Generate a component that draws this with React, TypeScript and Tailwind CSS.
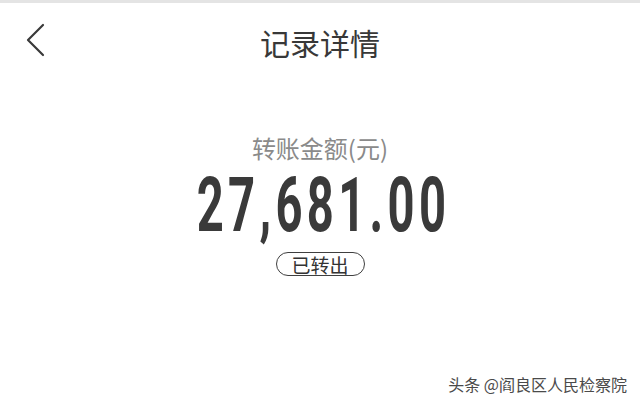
export default function App() {
  const cjk = { fontFamily: '"Noto Sans CJK SC", "Noto Sans", sans-serif' };

  return (
    <div className="relative h-[403px] w-[640px] overflow-hidden bg-white" style={cjk}>
      {/* top divider */}
      <div className="h-[3px] bg-[#e4e4e4]" />

      {/* Header */}
      <div className="relative flex h-[77px] items-center justify-center">
        <button className="absolute left-[22px] top-[17px] flex h-[40px] w-[28px] items-center justify-center">
          <svg width="20" height="34" viewBox="0 0 20 34" fill="none">
            <polyline
              points="17,2 2,17 17,32"
              stroke="#3a3a3a"
              strokeWidth="2.2"
              strokeLinecap="round"
              strokeLinejoin="round"
            />
          </svg>
        </button>
        <h1 className="text-[30px] leading-none font-normal text-[#383838]">记录详情</h1>
      </div>

      {/* Amount */}
      <div className="mt-[53px] flex flex-col items-center">
        <p className="text-[24px] leading-[30px] text-[#8a8a8a]">转账金额(元)</p>
        <div className="h-[84px]">
          <span
            className="-mr-[7px] inline-block scale-x-[0.62] text-[76px] leading-[84px] font-bold tracking-[7px] text-[#3a3a3a]"
            style={{ fontFamily: 'Roboto, "DejaVu Sans", sans-serif' }}
          >
            27,681.00
          </span>
        </div>
        <div className="mt-[5px] flex h-[24px] w-[89px] items-center justify-center rounded-full border-[1.6px] border-[#3f3f3f]">
          <span className="text-[19px] leading-none text-[#333333]">已转出</span>
        </div>
      </div>

      {/* watermark */}
      <div
        className="absolute right-[13px] bottom-[11px] text-[16px] leading-none text-[#4a4a4a]"
        style={{ textShadow: '0 0 2px #fff, 0 0 1px #fff' }}
      >
        头条 @阎良区人民检察院
      </div>
    </div>
  );
}
